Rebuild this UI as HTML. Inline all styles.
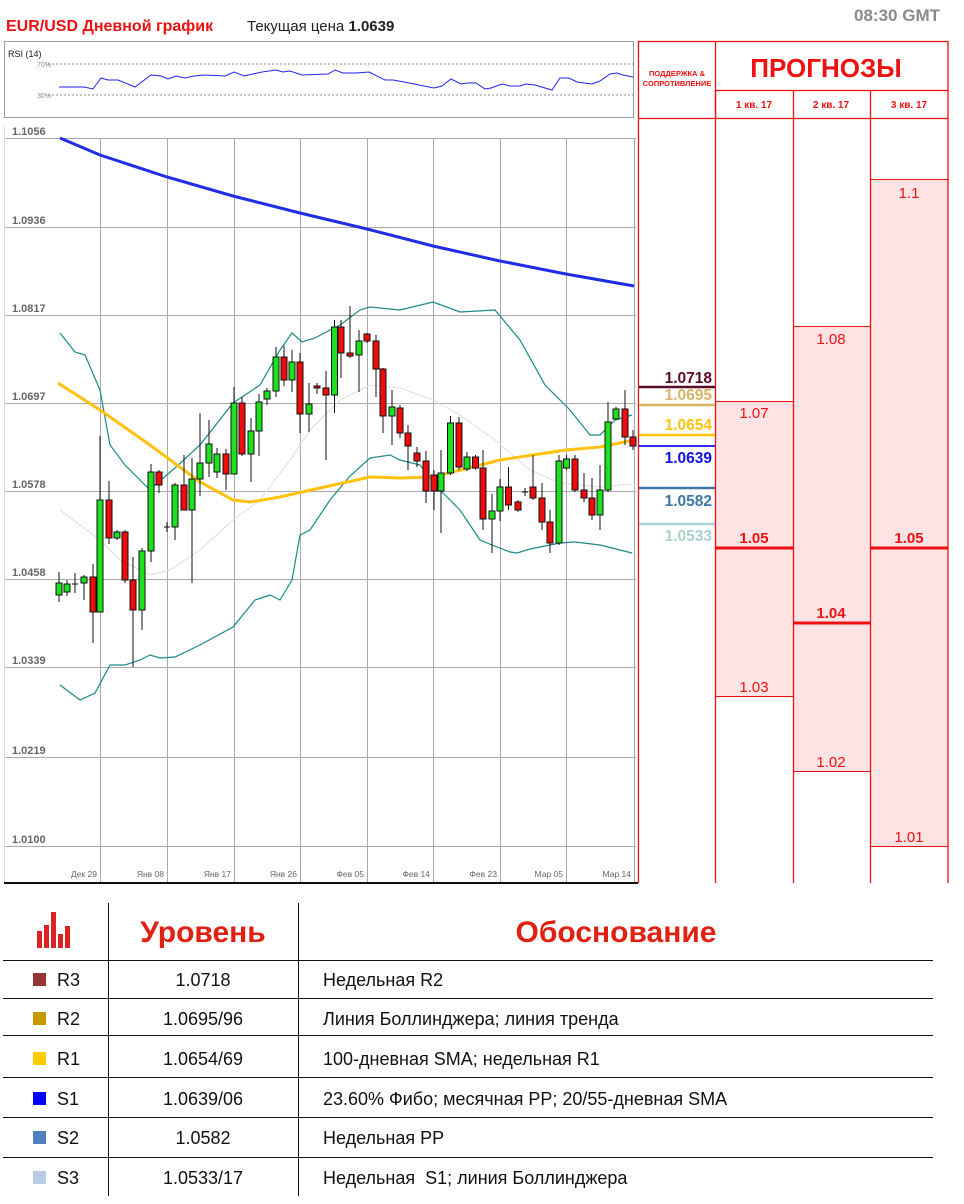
<!DOCTYPE html>
<html><head><meta charset="utf-8"><style>
html,body{margin:0;padding:0;background:#fff;}
svg{display:block;font-family:"Liberation Sans",sans-serif;}
</style></head><body>
<svg width="964" height="1204" viewBox="0 0 964 1204" xmlns="http://www.w3.org/2000/svg">
<!-- header -->
<text x="6" y="31" font-size="16" font-weight="bold" fill="#ee1111">EUR/USD Дневной график</text>
<text x="247" y="31" font-size="15" fill="#222">Текущая цена <tspan font-weight="bold">1.0639</tspan></text>
<text x="940" y="21" font-size="17" font-weight="bold" fill="#8a8a8a" text-anchor="end">08:30 GMT</text>

<!-- RSI -->
<rect x="4.5" y="41.5" width="629" height="76" fill="#fff" stroke="#999"/>
<text x="8" y="57" font-size="9" fill="#222">RSI (14)</text>
<text x="37" y="67" font-size="7" fill="#888">70%</text>
<text x="37" y="98" font-size="7" fill="#888">30%</text>
<line x1="48" y1="64" x2="633" y2="64" stroke="#666" stroke-dasharray="2,2" stroke-width="0.8"/>
<line x1="48" y1="95" x2="633" y2="95" stroke="#666" stroke-dasharray="2,2" stroke-width="0.8"/>
<polyline fill="none" stroke="#2222ee" stroke-width="1" points="59,87 84,87 93,89 101,78 108,80 118,80 135,87 151,75 161,76 168,79 176,76 185,78 194,76 205,75 225,76 234,72 244,76 262,72 276,70 283,72 290,71 302,75 328,74 335,70 343,73 356,73 369,72 385,80 393,80 404,82 434,88 442,86 451,79 461,84 467,83 476,83 485,89 491,88 502,84 510,86 520,86 526,84 535,85 552,90 560,78 569,78 577,82 592,84 600,81 610,74 617,73 623,75 633,77"/>

<!-- main chart grid -->
<g stroke="#aaa" stroke-width="1">
<line x1="4" y1="138.5" x2="636" y2="138.5"/>
<line x1="4" y1="227.5" x2="636" y2="227.5"/>
<line x1="4" y1="315.5" x2="636" y2="315.5"/>
<line x1="4" y1="403.5" x2="636" y2="403.5"/>
<line x1="4" y1="491.5" x2="636" y2="491.5"/>
<line x1="4" y1="579.5" x2="636" y2="579.5"/>
<line x1="4" y1="667.5" x2="636" y2="667.5"/>
<line x1="4" y1="757.5" x2="636" y2="757.5"/>
<line x1="4" y1="846.5" x2="636" y2="846.5"/>
<line x1="100.5" y1="138" x2="100.5" y2="882"/>
<line x1="167.5" y1="138" x2="167.5" y2="882"/>
<line x1="234.5" y1="138" x2="234.5" y2="882"/>
<line x1="300.5" y1="138" x2="300.5" y2="882"/>
<line x1="367.5" y1="138" x2="367.5" y2="882"/>
<line x1="433.5" y1="138" x2="433.5" y2="882"/>
<line x1="500.5" y1="138" x2="500.5" y2="882"/>
<line x1="566.5" y1="138" x2="566.5" y2="882"/>
<line x1="634.5" y1="138" x2="634.5" y2="882"/>
</g>
<line x1="4.5" y1="125" x2="4.5" y2="882" stroke="#ddd"/>
<line x1="4" y1="883" x2="638" y2="883" stroke="#111" stroke-width="2"/>
<g font-size="11" fill="#666" font-weight="bold">
<text x="12" y="135">1.1056</text><text x="12" y="224">1.0936</text><text x="12" y="312">1.0817</text><text x="12" y="400">1.0697</text><text x="12" y="488">1.0578</text><text x="12" y="576">1.0458</text><text x="12" y="664">1.0339</text><text x="12" y="754">1.0219</text><text x="12" y="843">1.0100</text>
</g>
<g font-size="8.5" fill="#666" text-anchor="end">
<text x="97" y="877">Дек 29</text><text x="164" y="877">Янв 08</text><text x="231" y="877">Янв 17</text><text x="297" y="877">Янв 26</text><text x="364" y="877">Фев 05</text><text x="430" y="877">Фев 14</text><text x="497" y="877">Фев 23</text><text x="563" y="877">Мар 05</text><text x="631" y="877">Мар 14</text>
</g>

<!-- indicator lines -->
<polyline fill="none" stroke="#1f2ee6" stroke-width="3" points="60,138 100,155 167,177 233,196 300,213 367,229 433,246 500,261 566,274 634,286"/>
<polyline fill="none" stroke="#ddd" stroke-width="1" points="60,510 80,525 100,540 120,560 150,575 170,570 200,550 233,520 260,500 290,460 310,430 340,400 370,385 400,388 433,400 460,415 495,440 530,470 560,483 600,487 632,484"/>
<polyline fill="none" stroke="#1a8a8a" stroke-width="1.2" points="60,333 75,352 85,355 100,390 110,445 125,465 140,480 150,490 155,485 175,468 200,445 233,403 260,385 280,350 292,333 302,342 315,338 330,330 340,325 360,310 370,307 400,310 433,302 460,312 495,310 520,340 545,385 570,410 590,435 600,435 615,420 632,415"/>
<polyline fill="none" stroke="#1a8a8a" stroke-width="1.2" points="60,685 80,700 95,693 110,665 125,665 140,660 150,655 160,658 175,657 200,645 233,627 255,600 270,595 280,600 292,580 300,535 310,530 330,500 350,476 370,458 390,455 400,460 420,465 440,490 460,510 480,540 492,545 510,552 517,553 530,549 550,545 560,543 575,542 600,545 632,553"/>
<polyline fill="none" stroke="#ffc20e" stroke-width="3" points="58,383 100,410 150,445 200,482 233,500 250,502 280,497 320,488 370,477 400,478 433,477 500,460 566,450 600,447 634,440"/>

<!-- candles -->
<g stroke="#111" stroke-width="1">
<line x1="59" y1="572" x2="59" y2="602"/><rect x="56" y="583" width="6" height="12" fill="#1de11d"/>
<line x1="67" y1="580" x2="67" y2="596"/><rect x="64" y="584" width="6" height="8" fill="#1de11d"/>
<line x1="75" y1="573" x2="75" y2="593"/><line x1="72" y1="584" x2="78" y2="584"/>
<line x1="84" y1="575" x2="84" y2="600"/><rect x="81" y="577" width="6" height="6" fill="#1de11d"/>
<line x1="93" y1="564" x2="93" y2="643"/><rect x="90" y="577" width="6" height="35" fill="#ee0c0c"/>
<line x1="100" y1="436" x2="100" y2="612"/><rect x="97" y="500" width="6" height="112" fill="#1de11d"/>
<line x1="109" y1="481" x2="109" y2="544"/><rect x="106" y="500" width="6" height="38" fill="#ee0c0c"/>
<line x1="117" y1="530" x2="117" y2="540"/><rect x="114" y="532" width="6" height="6" fill="#1de11d"/>
<line x1="125" y1="530" x2="125" y2="583"/><rect x="122" y="532" width="6" height="48" fill="#ee0c0c"/>
<line x1="133" y1="557" x2="133" y2="667"/><rect x="130" y="580" width="6" height="30" fill="#ee0c0c"/>
<line x1="142" y1="548" x2="142" y2="630"/><rect x="139" y="551" width="6" height="59" fill="#1de11d"/>
<line x1="151" y1="464" x2="151" y2="562"/><rect x="148" y="472" width="6" height="79" fill="#1de11d"/>
<line x1="159" y1="470" x2="159" y2="493"/><rect x="156" y="472" width="6" height="13" fill="#ee0c0c"/>
<line x1="167" y1="522" x2="167" y2="532"/><line x1="164" y1="527" x2="170" y2="527"/>
<line x1="175" y1="483" x2="175" y2="540"/><rect x="172" y="485" width="6" height="42" fill="#1de11d"/>
<line x1="184" y1="455" x2="184" y2="510"/><rect x="181" y="485" width="6" height="25" fill="#ee0c0c"/>
<line x1="192" y1="458" x2="192" y2="583"/><rect x="189" y="479" width="6" height="31" fill="#1de11d"/>
<line x1="200" y1="413" x2="200" y2="496"/><rect x="197" y="463" width="6" height="16" fill="#1de11d"/>
<line x1="209" y1="420" x2="209" y2="477"/><rect x="206" y="444" width="6" height="19" fill="#1de11d"/>
<line x1="217" y1="448" x2="217" y2="478"/><rect x="214" y="454" width="6" height="18" fill="#1de11d"/>
<line x1="226" y1="449" x2="226" y2="490"/><rect x="223" y="454" width="6" height="20" fill="#ee0c0c"/>
<line x1="234" y1="387" x2="234" y2="474"/><rect x="231" y="403" width="6" height="71" fill="#1de11d"/>
<line x1="242" y1="397" x2="242" y2="456"/><rect x="239" y="403" width="6" height="51" fill="#ee0c0c"/>
<line x1="251" y1="418" x2="251" y2="482"/><rect x="248" y="431" width="6" height="23" fill="#1de11d"/>
<line x1="259" y1="394" x2="259" y2="456"/><rect x="256" y="402" width="6" height="29" fill="#1de11d"/>
<line x1="267" y1="388" x2="267" y2="405"/><rect x="264" y="391" width="6" height="8" fill="#1de11d"/>
<line x1="276" y1="347" x2="276" y2="397"/><rect x="273" y="357" width="6" height="34" fill="#1de11d"/>
<line x1="284" y1="346" x2="284" y2="386"/><rect x="281" y="357" width="6" height="23" fill="#ee0c0c"/>
<line x1="292" y1="350" x2="292" y2="392"/><rect x="289" y="362" width="6" height="18" fill="#1de11d"/>
<line x1="300" y1="353" x2="300" y2="433"/><rect x="297" y="362" width="6" height="52" fill="#ee0c0c"/>
<line x1="309" y1="383" x2="309" y2="432"/><rect x="306" y="404" width="6" height="10" fill="#1de11d"/>
<line x1="317" y1="383" x2="317" y2="394"/><rect x="314" y="386" width="6" height="2" fill="#ee0c0c"/>
<line x1="326" y1="371" x2="326" y2="460"/><rect x="323" y="388" width="6" height="7" fill="#ee0c0c"/>
<line x1="334.5" y1="320" x2="334.5" y2="413"/><rect x="331.5" y="327" width="6" height="68" fill="#1de11d"/>
<line x1="341" y1="320" x2="341" y2="378"/><rect x="338" y="327" width="6" height="26" fill="#ee0c0c"/>
<line x1="350" y1="306" x2="350" y2="358"/><rect x="347" y="353" width="6" height="3" fill="#ee0c0c"/>
<line x1="359" y1="330" x2="359" y2="392"/><rect x="356" y="341" width="6" height="14" fill="#1de11d"/>
<line x1="367" y1="333" x2="367" y2="343"/><rect x="364" y="334" width="6" height="7" fill="#ee0c0c"/>
<line x1="376" y1="335" x2="376" y2="397"/><rect x="373" y="341" width="6" height="28" fill="#ee0c0c"/>
<line x1="383" y1="368" x2="383" y2="433"/><rect x="380" y="369" width="6" height="47" fill="#ee0c0c"/>
<line x1="392" y1="390" x2="392" y2="445"/><rect x="389" y="407" width="6" height="9" fill="#1de11d"/>
<line x1="400" y1="405" x2="400" y2="438"/><rect x="397" y="408" width="6" height="25" fill="#ee0c0c"/>
<line x1="408" y1="425" x2="408" y2="470"/><rect x="405" y="433" width="6" height="13" fill="#ee0c0c"/>
<line x1="417" y1="447" x2="417" y2="467"/><rect x="414" y="453" width="6" height="8" fill="#ee0c0c"/>
<line x1="426" y1="451" x2="426" y2="503"/><rect x="423" y="461" width="6" height="30" fill="#ee0c0c"/>
<line x1="434" y1="470" x2="434" y2="510"/><rect x="431" y="475" width="6" height="16" fill="#ee0c0c"/>
<line x1="441" y1="450" x2="441" y2="533"/><rect x="438" y="473" width="6" height="18" fill="#1de11d"/>
<line x1="450.5" y1="416" x2="450.5" y2="475"/><rect x="447.5" y="423" width="6" height="50" fill="#1de11d"/>
<line x1="459" y1="417" x2="459" y2="470"/><rect x="456" y="423" width="6" height="44" fill="#ee0c0c"/>
<line x1="467" y1="452" x2="467" y2="471"/><rect x="464" y="457" width="6" height="12" fill="#1de11d"/>
<line x1="475.5" y1="455" x2="475.5" y2="470"/><rect x="472.5" y="457" width="6" height="11" fill="#ee0c0c"/>
<line x1="483" y1="450" x2="483" y2="530"/><rect x="480" y="468" width="6" height="51" fill="#ee0c0c"/>
<line x1="492" y1="494" x2="492" y2="553"/><rect x="489" y="511" width="6" height="8" fill="#1de11d"/>
<line x1="500" y1="479" x2="500" y2="521"/><rect x="497" y="487" width="6" height="24" fill="#1de11d"/>
<line x1="508.5" y1="467" x2="508.5" y2="510"/><rect x="505.5" y="487" width="6" height="18" fill="#ee0c0c"/>
<line x1="518" y1="500" x2="518" y2="512"/><rect x="515" y="502" width="6" height="8" fill="#ee0c0c"/>
<line x1="525" y1="488" x2="525" y2="496"/><line x1="522" y1="492" x2="528" y2="492"/>
<line x1="533" y1="455" x2="533" y2="500"/><rect x="530" y="487" width="6" height="11" fill="#ee0c0c"/>
<line x1="542" y1="483" x2="542" y2="530"/><rect x="539" y="498" width="6" height="24" fill="#ee0c0c"/>
<line x1="550" y1="510" x2="550" y2="553"/><rect x="547" y="522" width="6" height="21" fill="#ee0c0c"/>
<line x1="559" y1="455" x2="559" y2="545"/><rect x="556" y="461" width="6" height="82" fill="#1de11d"/>
<line x1="566.5" y1="455" x2="566.5" y2="470"/><rect x="563.5" y="459" width="6" height="9" fill="#1de11d"/>
<line x1="575" y1="455" x2="575" y2="492"/><rect x="572" y="459" width="6" height="31" fill="#ee0c0c"/>
<line x1="584" y1="473" x2="584" y2="502"/><rect x="581" y="490" width="6" height="8" fill="#ee0c0c"/>
<line x1="592" y1="478" x2="592" y2="520"/><rect x="589" y="498" width="6" height="17" fill="#ee0c0c"/>
<line x1="600" y1="465" x2="600" y2="530"/><rect x="597" y="490" width="6" height="25" fill="#1de11d"/>
<line x1="608" y1="402" x2="608" y2="492"/><rect x="605" y="422" width="6" height="68" fill="#1de11d"/>
<line x1="616" y1="407" x2="616" y2="420"/><rect x="613" y="409" width="6" height="10" fill="#1de11d"/>
<line x1="625" y1="390" x2="625" y2="445"/><rect x="622" y="409" width="6" height="28" fill="#ee0c0c"/>
<line x1="633" y1="430" x2="633" y2="450"/><rect x="630" y="437" width="6" height="9" fill="#ee0c0c"/>
</g>

<!-- right panel: forecast pink boxes -->
<rect x="716" y="401" width="77" height="295" fill="#fde3e3"/>
<rect x="794" y="326" width="76" height="445" fill="#fde3e3"/>
<rect x="871" y="179" width="77" height="667" fill="#fde3e3"/>
<g stroke="#ee1111" stroke-width="1">
<line x1="716" y1="401.5" x2="793" y2="401.5"/><line x1="716" y1="696.5" x2="793" y2="696.5"/>
<line x1="794" y1="326.5" x2="870" y2="326.5"/><line x1="794" y1="771.5" x2="870" y2="771.5"/>
<line x1="871" y1="179.5" x2="948" y2="179.5"/><line x1="871" y1="846.5" x2="948" y2="846.5"/>
</g>
<g stroke="#ee1111" stroke-width="3">
<line x1="716" y1="548" x2="793" y2="548"/>
<line x1="794" y1="623" x2="870" y2="623"/>
<line x1="871" y1="548" x2="948" y2="548"/>
</g>
<g font-size="15" fill="#ee1111" text-anchor="middle">
<text x="754" y="418">1.07</text><text x="754" y="692">1.03</text>
<text x="831" y="344">1.08</text><text x="831" y="767">1.02</text>
<text x="909" y="198">1.1</text><text x="909" y="842">1.01</text>
</g>
<g font-size="15" fill="#ee1111" text-anchor="middle" font-weight="bold">
<text x="754" y="543">1.05</text><text x="831" y="618">1.04</text><text x="909" y="543">1.05</text>
</g>
<!-- grid of right panel -->
<g stroke="#ee1111" stroke-width="1.3">
<line x1="638.5" y1="41" x2="638.5" y2="883"/>
<line x1="715.5" y1="90" x2="715.5" y2="883"/>
<line x1="793.5" y1="90" x2="793.5" y2="883"/>
<line x1="870.5" y1="90" x2="870.5" y2="883"/>
<line x1="948" y1="41" x2="948" y2="883"/>
<line x1="638" y1="41.5" x2="948" y2="41.5"/>
<line x1="715" y1="90.5" x2="948" y2="90.5"/>
<line x1="638" y1="118.5" x2="948" y2="118.5"/>
<line x1="715.5" y1="41" x2="715.5" y2="118"/>
</g>
<g fill="#ee1111" font-weight="bold" text-anchor="middle">
<text x="677" y="76" font-size="7.5">ПОДДЕРЖКА &amp;</text>
<text x="677" y="86" font-size="7.5">СОПРОТИВЛЕНИЕ</text>
<text x="826" y="77" font-size="26">ПРОГНОЗЫ</text>
<text x="754" y="108" font-size="10">1 кв. 17</text>
<text x="831" y="108" font-size="10">2 кв. 17</text>
<text x="909" y="108" font-size="10">3 кв. 17</text>
</g>
<!-- S/R levels -->
<g stroke-width="2.5">
<line x1="639" y1="387" x2="715" y2="387" stroke="#5c0a2a"/>
<line x1="639" y1="405" x2="715" y2="405" stroke="#d8b468"/>
<line x1="639" y1="435" x2="715" y2="435" stroke="#ffc20e"/>
<line x1="639" y1="446" x2="715" y2="446" stroke="#1010ee" stroke-width="1.8"/>
<line x1="639" y1="488" x2="715" y2="488" stroke="#3a78a5"/>
<line x1="639" y1="524" x2="715" y2="524" stroke="#aad2d0"/>
</g>
<g font-size="15.5" font-weight="bold" text-anchor="end">
<text x="712" y="383" fill="#5c0a2a">1.0718</text>
<text x="712" y="400" fill="#d8b468">1.0695</text>
<text x="712" y="430" fill="#ffc20e">1.0654</text>
<text x="712" y="463" fill="#1010ee">1.0639</text>
<text x="712" y="506" fill="#3a78a5">1.0582</text>
<text x="712" y="541" fill="#aad2d0">1.0533</text>
</g>

<!-- bottom table -->
<g fill="#dd2222">
<rect x="37" y="931" width="5" height="17"/>
<rect x="44" y="925" width="5" height="23"/>
<rect x="51" y="912" width="5" height="36"/>
<rect x="58" y="934" width="5" height="14"/>
<rect x="65" y="926" width="5" height="22"/>
</g>
<g stroke="#111" stroke-width="1">
<line x1="108.5" y1="903" x2="108.5" y2="1196"/>
<line x1="298.5" y1="903" x2="298.5" y2="1196"/>
<line x1="3" y1="960.5" x2="933" y2="960.5"/>
<line x1="3" y1="998.5" x2="933" y2="998.5"/>
<line x1="3" y1="1035.5" x2="933" y2="1035.5"/>
<line x1="3" y1="1077.5" x2="933" y2="1077.5"/>
<line x1="3" y1="1117.5" x2="933" y2="1117.5"/>
<line x1="3" y1="1157.5" x2="933" y2="1157.5"/>
</g>
<text x="203" y="942" font-size="30" font-weight="bold" fill="#e02010" text-anchor="middle">Уровень</text>
<text x="616" y="942" font-size="30" font-weight="bold" fill="#e02010" text-anchor="middle">Обоснование</text>
<rect x="33" y="973" width="13" height="13" fill="#943634"/>
<rect x="33" y="1012" width="13" height="13" fill="#c89800"/>
<rect x="33" y="1052" width="13" height="13" fill="#ffcc00"/>
<rect x="33" y="1092" width="13" height="13" fill="#0000ff"/>
<rect x="33" y="1131" width="13" height="13" fill="#4f81bd"/>
<rect x="33" y="1171" width="13" height="13" fill="#b8cce4"/>
<g font-size="18" fill="#111">
<text x="57" y="986">R3</text><text x="57" y="1025">R2</text><text x="57" y="1065">R1</text><text x="57" y="1105">S1</text><text x="57" y="1144">S2</text><text x="57" y="1184">S3</text>
</g>
<g font-size="18" fill="#111" text-anchor="middle">
<text x="203" y="986">1.0718</text><text x="203" y="1025">1.0695/96</text><text x="203" y="1065">1.0654/69</text><text x="203" y="1105">1.0639/06</text><text x="203" y="1144">1.0582</text><text x="203" y="1184">1.0533/17</text>
</g>
<g font-size="18" fill="#111">
<text x="323" y="986">Недельная R2</text>
<text x="323" y="1025">Линия Боллинджера; линия тренда</text>
<text x="323" y="1065">100-дневная SMA; недельная R1</text>
<text x="323" y="1105">23.60% Фибо; месячная PP; 20/55-дневная SMA</text>
<text x="323" y="1144">Недельная PP</text>
<text x="323" y="1184" xml:space="preserve">Недельная  S1; линия Боллинджера</text>
</g>
</svg>
</body></html>
